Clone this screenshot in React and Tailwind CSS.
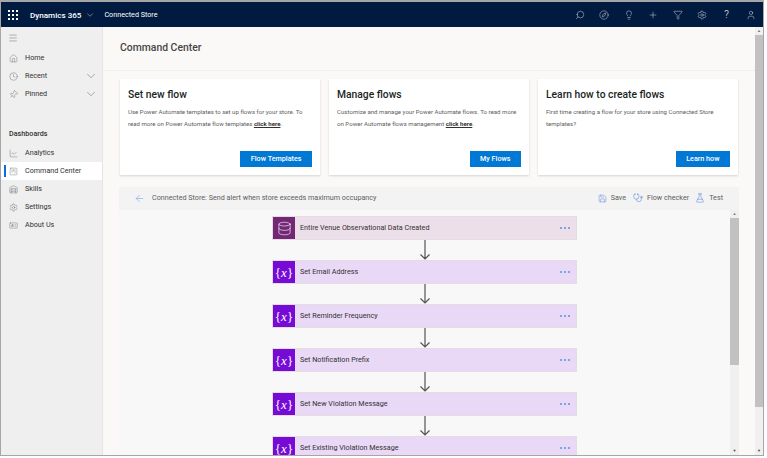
import React from 'react';
import {
  Search, Compass, Lightbulb, Plus, Funnel, Settings, User,
  ChevronDown, Menu, Home, Clock, Pin, LineChart, SquareKanban, Warehouse,
  ArrowLeft, Save, Stethoscope, FlaskConical, Database, IdCard,
} from 'lucide-react';

const font = { fontFamily: 'Roboto, sans-serif' };

const Waffle = () => (
  <svg width="10" height="10" viewBox="0 0 10 10" fill="#fff">
    {[0, 4, 8].map((y) => [0, 4, 8].map((x) => <rect key={`${x}-${y}`} x={x} y={y} width="2" height="2" />))}
  </svg>
);

const NavItem = ({ icon: Icon, label, chevron, active, iconClass = '' }) => (
  <div className={`relative flex items-center h-[18px] pl-[8px] pr-[4px] text-[7.2px] text-[#323130] ${active ? 'bg-white' : ''}`}>
    {active && <div className="absolute left-[3px] top-[3px] w-[2px] h-[12px] bg-[#0f6cdc]" />}
    <Icon size={9} strokeWidth={1} className={`text-[#555] mr-[7px] shrink-0 ${iconClass}`} />
    <span className="flex-1">{label}</span>
    {chevron && <ChevronDown size={14} strokeWidth={0.8} className="text-[#555]" />}
  </div>
);

const Card = ({ title, body, link, button }) => (
  <div className="w-[200px] h-[96px] bg-white shadow-[0_1px_2px_rgba(0,0,0,0.15)] px-[8px] pt-[9px] flex flex-col">
    <h2 className="text-[10.3px] leading-[14px] font-medium text-[#201f1e]">{title}</h2>
    <p className="mt-[4px] text-[6.1px] leading-[11.5px] text-[#605e5c]">
      {body}{' '}
      {link && <><span className="font-bold underline text-[#323130]">click here</span><span>.</span></>}
    </p>
    <div className="mt-auto mb-[8px] flex justify-end">
      <div className="h-[16px] px-[10.5px] bg-[#0078d4] text-white text-[7.2px] font-medium flex items-center">{button}</div>
    </div>
  </div>
);

const Node = ({ label, trigger }) => (
  <div className={`shrink-0 w-[305px] h-[24px] flex items-stretch border border-[#e3dde3] ${trigger ? 'bg-[#eddfe9]' : 'bg-[#e9d9f7]'}`}>
    <div className={`w-[22px] flex items-center justify-center text-white ${trigger ? 'bg-[#742774]' : 'bg-[#770bd6]'}`}>
      {trigger
        ? <Database size={15} strokeWidth={1} />
        : <span className="text-[13px] leading-none" style={{ fontFamily: '"Liberation Serif", serif' }}>{'{'}<i>x</i>{'}'}</span>}
    </div>
    <span className="pl-[5px] flex-1 self-center text-[7.2px] text-[#323130]">{label}</span>
    <span className="pr-[6px] self-center flex gap-[2px]">
      {[0, 1, 2].map((i) => <span key={i} className="w-[2px] h-[2px] bg-[#7aa5e6]" />)}
    </span>
  </div>
);

const Arrow = () => (
  <svg className="shrink-0" width="12" height="20" viewBox="0 0 12 20" fill="none" stroke="#555" strokeWidth="1.2">
    <path d="M6 0V19M1.5 14.5L6 19L10.5 14.5" />
  </svg>
);

const Scrollbar = ({ className, thumb }) => (
  <div className={`flex flex-col items-center bg-[#f0f0f0] ${className}`}>
    <div className="h-[8px] text-[4px] leading-[8px] text-[#777]">▲</div>
    <div className={`w-full bg-[#c1c1c1] ${thumb}`} />
    <div className="flex-1" />
    <div className="h-[8px] text-[4px] leading-[8px] text-[#444]">▼</div>
  </div>
);

const steps = ['Set Email Address', 'Set Reminder Frequency', 'Set Notification Prefix', 'Set New Violation Message', 'Set Existing Violation Message'];

export default function App() {
  return (
    <div className="w-[767px] h-[458px] bg-white overflow-hidden" style={font}>
      <div className="w-[764px] h-[456px] border border-[#a6a6a6] border-t-2 flex flex-col overflow-hidden">
        {/* Top bar */}
        <header className="h-[25px] shrink-0 bg-[#001a40] flex items-center text-white">
          <div className="w-[24px] flex justify-center"><Waffle /></div>
          <span className="ml-[5px] pt-[1px] text-[8.1px] font-medium">Dynamics 365</span>
          <ChevronDown size={10} strokeWidth={1} className="ml-[4px]" />
          <span className="ml-[9px] pt-[1px] text-[7.2px]">Connected Store</span>
          <div className="ml-auto flex items-center gap-[14.5px] pr-[7px]">
            <Search size={10} strokeWidth={1} className="-scale-x-100" />
            <Compass size={10} strokeWidth={1} />
            <Lightbulb size={10} strokeWidth={1} />
            <Plus size={10} strokeWidth={1} />
            <Funnel size={10} strokeWidth={1} />
            <Settings size={10} strokeWidth={1} />
            <span className="w-[10px] text-center text-[10px] leading-none font-light">?</span>
            <User size={10} strokeWidth={1} />
          </div>
        </header>

        <div className="flex-1 flex min-h-0">
          {/* Sidebar */}
          <aside className="w-[102px] shrink-0 bg-[#efefef] border-r border-[#e4e4e4] pt-[5px]">
            <div className="h-[12px] pl-[7px] flex items-center"><Menu size={10} strokeWidth={1} className="text-[#555]" /></div>
            <div className="mt-[5px]">
              <NavItem icon={Home} label="Home" />
              <NavItem icon={Clock} label="Recent" chevron />
              <NavItem icon={Pin} label="Pinned" chevron iconClass="rotate-45" />
            </div>
            <div className="mt-[26px] h-[13px] pl-[8px] text-[7.2px] font-medium text-[#323130]">Dashboards</div>
            <div className="mt-[2px]">
              <NavItem icon={LineChart} label="Analytics" />
              <NavItem icon={SquareKanban} label="Command Center" active />
              <NavItem icon={Warehouse} label="Skills" />
              <NavItem icon={Settings} label="Settings" />
              <NavItem icon={IdCard} label="About Us" />
            </div>
          </aside>

          {/* Main */}
          <main className="flex-1 flex min-w-0 bg-[#faf9f8]">
            <div className="flex-1 min-w-0 flex flex-col">
              <div className="h-[44px] shrink-0 border-b border-[#f0efee] pl-[17px] pb-[2px] flex items-center">
                <h1 className="text-[10.4px] font-medium text-[#484644]">Command Center</h1>
              </div>
              <div className="pl-[17px] pt-[8px] flex gap-[9px]">
                <Card
                  title="Set new flow"
                  body="Use Power Automate templates to set up flows for your store. To read more on Power Automate flow templates"
                  link
                  button="Flow Templates"
                />
                <Card
                  title="Manage flows"
                  body="Customize and manage your Power Automate flows. To read more on Power Automate flows management"
                  link
                  button="My Flows"
                />
                <Card
                  title="Learn how to create flows"
                  body="First time creating a flow for your store using Connected Store templates?"
                  button="Learn how"
                />
              </div>

              {/* Flow panel */}
              <section className="ml-[16px] mt-[12px] w-[620px] flex-1 min-h-0 flex flex-col bg-[#f8f8f8]">
                <div className="h-[23px] shrink-0 bg-[#f3f3f3] flex items-center text-[7.2px] text-[#605e5c]">
                  <ArrowLeft size={11} strokeWidth={1} className="ml-[15px] text-[#4f8fe8]" />
                  <span className="ml-[7px]">Connected Store: Send alert when store exceeds maximum occupancy</span>
                  <div className="ml-auto flex items-center pr-[16px]">
                    <Save size={9} strokeWidth={1.2} className="text-[#4f7fd8]" />
                    <span className="ml-[4px]">Save</span>
                    <Stethoscope size={10} strokeWidth={1.2} className="ml-[7px] text-[#4f7fd8]" />
                    <span className="ml-[4px]">Flow checker</span>
                    <FlaskConical size={10} strokeWidth={1.2} className="ml-[6px] text-[#4f7fd8]" />
                    <span className="ml-[4px]">Test</span>
                  </div>
                </div>
                <div className="flex-1 min-h-0 flex">
                  <div className="flex-1 min-w-0 overflow-hidden flex flex-col items-center pt-[6px]">
                    <Node label="Entire Venue Observational Data Created" trigger />
                    {steps.map((s) => (
                      <React.Fragment key={s}>
                        <Arrow />
                        <Node label={s} />
                      </React.Fragment>
                    ))}
                  </div>
                  <Scrollbar className="w-[9px] shrink-0" thumb="h-[147px]" />
                </div>
              </section>
            </div>
            <Scrollbar className="w-[8px] shrink-0" thumb="h-[372px]" />
          </main>
        </div>
      </div>
    </div>
  );
}
